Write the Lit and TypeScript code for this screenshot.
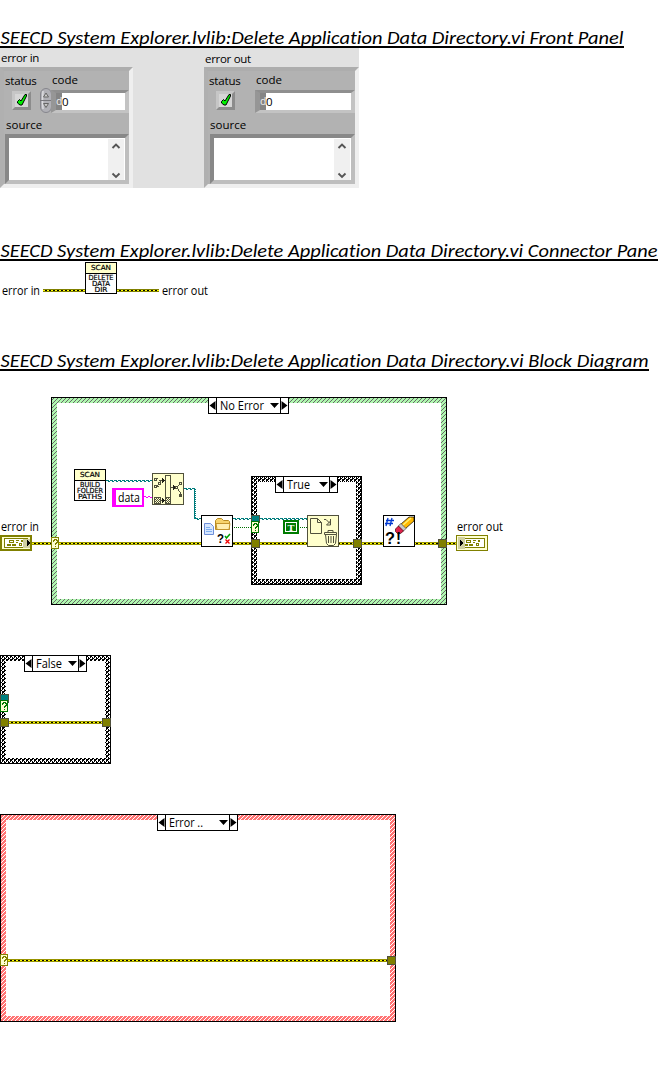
import { LitElement, html, svg, css } from "lit";
import { customElement, property } from "lit/decorators.js";

const label = (x: number, y: number, width: number, text: string, cls = "label") =>
  svg`<text class=${cls} x=${x} y=${y} textLength=${width} lengthAdjust="spacingAndGlyphs">${text}</text>`;

const errorWire = (x1: number, x2: number, y: number, edge = "#989400") => svg`
  <path d="M${x1} ${y + 0.5}H${x2}" stroke=${edge} stroke-width="3"/>
  <path d="M${x1} ${y + 0.5}H${x2}" stroke="#000"/>
  <path d="M${x1} ${y + 0.5}H${x2}" stroke="#ffff00" stroke-dasharray="2 2"/>`;

const tealWire = (x1: number, x2: number, y: number) => svg`
  <path d="M${x1} ${y + 0.5}H${x2}" stroke="#007c7c" stroke-dasharray="3 1"/>
  <path d="M${x1} ${y + 1.5}H${x2}" stroke="#007c7c" stroke-dasharray="2 2" stroke-dashoffset="-2"/>`;

const frame = (x: number, y: number, w: number, h: number, fill: string) => svg`
  <rect x=${x} y=${y} width=${w} height=${h} fill="#000"/>
  <rect x=${x + 1} y=${y + 1} width=${w - 2} height=${h - 2} fill=${`url(#${fill})`}/>
  <rect x=${x + 6} y=${y + 6} width=${w - 12} height=${h - 12} fill="#fff"/>`;

const selector = (x: number, y: number, w: number, text: string, tw: number) => svg`
  <rect x=${x + 0.5} y=${y + 0.5} width=${w - 1} height="16" fill="#fff" stroke="#000"/>
  <path d="M${x + 8.5} ${y}v17M${x + w - 8.5} ${y}v17" stroke="#000"/>
  <path d="M${x + 7.5} ${y + 4}v9l-6-4.500zM${x + w - 7.5} ${y + 4}v9l6-4.500zM${x + w - 19} ${y + 6}h9l-4.500 5z" fill="#000"/>
  ${label(x + 12, y + 13, tw, text)}`;

const tunnel = (x: number, y: number, color: string, w = 8, h = 8) =>
  svg`<rect x=${x + 0.5} y=${y + 0.5} width=${w} height=${h} fill=${color} stroke="#50503c"/>`;

const question = (x: number, y: number, color: string) => svg`
  <rect x=${x + 0.5} y=${y + 0.5} width="7" height="11" fill="#ffffd0" stroke=${color}/>
  <path d="M${x + 2} ${y + 4.5}v-1h1v-1h2v1h1v2h-1v1h-1v1.500M${x + 4} ${y + 8.5}v1.200" fill="none" stroke=${color}/>`;

const viIcon = (x: number, y: number, lines: [string, number][]) => svg`
  <rect x=${x + 0.5} y=${y + 0.5} width="31" height="31" fill="#fff" stroke="#000"/>
  <rect x=${x + 1} y=${y + 1} width="30" height="10" fill="#ffffcc"/>
  <path d="M${x} ${y + 11.5}h32" stroke="#000"/>
  ${label(x + 6, y + 8, 20, "SCAN", "pixel")}
  ${lines.map(([t, w], i) => label(x + 16 - w / 2, y + 18 + i * 6, w, t, "pixel"))}`;

const clusterGlyph = (x: number, y: number) => svg`
  <rect x=${x + 0.5} y=${y + 0.5} width="23" height="9" fill="#fff" stroke="#808000"/>
  <g fill="#808000">
    <rect x=${x + 5} y=${y + 2} width="5" height="3"/><rect x=${x + 3} y=${y + 6} width="4" height="2"/>
    <rect x=${x + 8} y=${y + 6} width="4" height="2"/><rect x=${x + 12} y=${y + 2} width="3" height="1"/>
    <rect x=${x + 12} y=${y + 4} width="2" height="1"/><rect x=${x + 17} y=${y + 2} width="2" height="2"/>
  </g>
  <rect x=${x + 6} y=${y + 3} width="3" height="1" fill="#fff"/>
  <rect x=${x + 15.500} y=${y + 5.500} width="2" height="2" fill="none" stroke="#808000"/>`;

const defs = svg`<defs>
  <pattern id="green" width="4" height="4" patternUnits="userSpaceOnUse">
    <rect width="4" height="4" fill="#b0f8b0"/>
    <path d="M3 0h1v1h-1zM2 1h1v1h-1zM1 2h1v1h-1zM0 3h1v1h-1z" fill="#686868"/>
  </pattern>
  <pattern id="red" width="4" height="4" patternUnits="userSpaceOnUse">
    <rect width="4" height="4" fill="#ff7474"/>
    <path d="M3 0h1v1h-1zM2 1h1v1h-1zM1 2h1v1h-1zM0 3h1v1h-1z" fill="#fff"/>
  </pattern>
  <pattern id="dark" width="4" height="4" patternUnits="userSpaceOnUse">
    <rect width="4" height="4" fill="#000"/>
    <path d="M0 0h2v1h-2zM3 1h1v1h-1zM2 2h2v1h-2zM1 3h1v1h-1zM1 1h1v1h-1z" fill="#fff"/>
  </pattern>
  <pattern id="check" width="2" height="2" patternUnits="userSpaceOnUse">
    <path d="M0 0h1v1h-1zM1 1h1v1h-1z" fill="#50503c"/>
  </pattern>
</defs>`;

const drawingText = css`
  svg { display: block; }
  text { fill: #000; white-space: pre; }
  .label { font: 12px "Open Sans", "Noto Sans", sans-serif; }
  .pixel { font: 7px "DejaVu Sans", sans-serif; stroke: #000; stroke-width: 0.2px; }
  .crisp { shape-rendering: crispEdges; }
`;

@customElement("section-title")
class SectionTitle extends LitElement {
  @property() text = "";
  @property({ type: Number }) width = 600;
  static styles = [drawingText, css`
    :host { display: block; height: 24px; overflow: hidden; }
    h2 { margin: 0; font: inherit; }
    .heading { font: italic 17.800px Carlito, Lato, sans-serif; font-variant-ligatures: none; }
  `];
  render() {
    return html`<h2><svg width="658" height="24">
      ${label(0.5, 20, this.width - 1, this.text, "heading")}
      <rect y="22" width=${this.width} height="2" fill="#000"/>
    </svg></h2>`;
  }
}

@customElement("error-cluster")
class ErrorCluster extends LitElement {
  @property() name = "";
  @property({ type: Boolean }) control = false;
  static styles = css`
    :host { display: block; font: 11.500px/16px "Open Sans", "Noto Sans", sans-serif; color: #000; }
    .name { height: 19px; padding: 2px 0 0 1px; box-sizing: border-box; letter-spacing: -0.3px; }
    .indicator.name { padding-top: 3px; }
    .box { box-sizing: border-box; width: 155px; height: 121px; background: #b2b2b2; padding: 0 0 0 1px;
      border: 4px solid; border-color: #adadad #efefef #efefef #b0b0b0; }
    .box.control { width: 133px; }
    .labels { display: flex; height: 19px; letter-spacing: -0.15px; }
    .status { width: 47px; padding-top: 2px; }
    .code { padding-top: 1px; letter-spacing: 0; }
    .values { display: flex; height: 23px; margin-left: 7px; }
    .led { box-sizing: border-box; width: 19px; height: 19px; margin: 1px 0 0; background: #d6d6d6;
      border: 3px solid; border-color: #c6c6c6 #8c8c8c #8c8c8c #c6c6c6; }
    .led svg { display: block; margin: -1px 0 0 1px; }
    .spin { width: 12px; margin: -2px -1px 0 9px; }
    .gap { width: 20px; }
    .field { box-sizing: border-box; display: flex; flex: 1; height: 23px; border: 4px solid;
      border-color: #8f8f8f #c3c3c3 #c3c3c3 #969696; border-width: 3px 4px 3px 5px; line-height: 17px; }
    .radix { width: 6px; background: #858585; color: #eee; text-align: center; font-size: 10.500px; }
    .digits { flex: 1; background: #fff; }
    .source { padding-left: 1px; height: 22px; padding-top: 4px; box-sizing: border-box; line-height: 15px; }
    .memo { box-sizing: border-box; height: 50px; width: 145px; margin-left: 1px; background: #fff; margin-top: -1px;
      border: 4px solid; border-color: #888 #bebebe #bebebe #888; display: flex; justify-content: flex-end; }
    .control .memo { width: 124px; margin-left: 0; }
    .scroll { width: 16px; margin: 1px 1px 0 0; background: #f0f0f0; }
    .scroll svg { display: block; }
  `;
  render() {
    const kind = this.control ? "control" : "indicator";
    return html`
      <div class="name ${kind}">${this.name}</div>
      <div class="box ${kind}">
        <div class="labels"><span class="status">status</span><span class="code">code</span></div>
        <div class="values">
          <div class="led"><svg width="12" height="14" viewBox="0 0 12 14">
            <path d="M1.500 8.500l2-2 1.500 1.500 4-6.500h1.500v1.500l-4.500 9h-2l-2.500-2z" fill="#00f000" stroke="#000"/>
          </svg></div>
          ${this.control
            ? html`<svg class="spin" width="12" height="25" viewBox="0 0 12 25">
                <rect x=".5" y=".5" width="11" height="24" rx="5.500" fill="#b0b0b6" stroke="#85858c"/>
                <path d="M3 3q-1 9 0 18" fill="none" stroke="#dcdce0" stroke-width="1.500"/>
                <path d="M0 12.500h12" stroke="#77777c"/>
                <path d="M3.500 9h5l-2.500-4zM3.500 15.500h5l-2.500 4z" fill="#ccc" stroke="#666"/>
              </svg>`
            : html`<span class="gap"></span>`}
          <div class="field"><span class="radix">d</span><span class="digits">0</span></div>
        </div>
        <div class="source">source</div>
        <div class="memo"><div class="scroll"><svg width="16" height="41" viewBox="0 0 16 41">
          <path d="M4.500 9l3.500-3.500 3.500 3.500M4.500 34.500l3.500 3.500 3.500-3.500" fill="none" stroke="#555" stroke-width="1.900"/>
        </svg></div></div>
      </div>`;
  }
}

@customElement("connector-pane")
class ConnectorPane extends LitElement {
  static styles = [drawingText, css`:host { display: block; }`];
  render() {
    return html`<svg width="658" height="40" viewBox="0 261 658 40">
      <g class="crisp" fill="none">
        ${errorWire(43, 85, 290, "#808000")}${errorWire(117, 159, 290, "#808000")}
        ${viIcon(85, 262, [["DELETE", 25], ["DATA", 18], ["DIR", 13]])}
      </g>
      ${label(2, 295, 38, "error in")}${label(162, 295, 46, "error out")}
    </svg>`;
  }
}

@customElement("block-diagram")
class BlockDiagram extends LitElement {
  static styles = [drawingText, css`
    :host { display: block; }
    .bold { font: bold 17px "Liberation Sans", sans-serif; }
    .mark { font: bold 13px "Liberation Sans", sans-serif; }
    .tee { font: bold 9px "Liberation Serif", serif; fill: #fff; }
    .data { font: 13px "Open Sans", sans-serif; }
  `];

  pathIcon() {
    return svg`
      <rect x="152.500" y="473.500" width="31" height="31" fill="#ffffcc" stroke="#50503c"/>
      <path d="M155 480.500l3-2M158 484l3-3M156 485l3 2M159 480.500h5M171 487.500h6M177 487l4-4M178 490l3 3M157 500.500h8" stroke="#50503c" fill="none"/>
      <path d="M162 478v5l3-2.500zM173 485v5l3-2.500zM162 498v5l3-2.500z" fill="#202018"/>
      <g fill="#ffffcc" stroke="#50503c">
        <rect x="154.500" y="478.500" width="2" height="2"/><rect x="158.500" y="482.500" width="2" height="2"/>
        <rect x="154.500" y="485.500" width="2" height="2"/><rect x="165.500" y="475.500" width="5" height="22"/>
        <rect x="175.500" y="486.500" width="2" height="2"/><rect x="179.500" y="482.500" width="2" height="2"/>
        <rect x="179.500" y="494.500" width="2" height="2" fill="#50503c"/>
        <rect x="154.500" y="497.500" width="6" height="6"/><rect x="165.500" y="497.500" width="5" height="6"/>
      </g>
      <path d="M178 489.500l3 4" stroke="#50503c"/>
      <rect x="155" y="498" width="6" height="6" fill="url(#check)"/>
      <rect x="166" y="498" width="5" height="6" fill="url(#check)"/>`;
  }

  fileIcon() {
    return svg`
      <rect class="crisp" x="201.500" y="515.500" width="31" height="31" fill="#fff" stroke="#000"/>
      <path d="M204.500 523.500h6l3 3v8h-9z" fill="#d6e6ff" stroke="#6f8fd8"/>
      <path d="M206 527.500h4M206 529.500h6M206 531.500h6" stroke="#7fb0f0"/>
      <path d="M215.500 529.500v-9l2-2h4l2 2h5l1 1v8z" fill="#f7d36c" stroke="#b88a20"/>
      <path d="M217 529.500l-1-6h14l-1 6z" fill="#ffeeb0" stroke="#c4942c"/>
      ${label(217, 543, 7, "?", "mark")}
      <path d="M225 536l1.500 2 3.500-4" fill="none" stroke="#00a000" stroke-width="1.500"/>
      <path d="M225.500 539.500l4 4m0-4l-4 4" stroke="#f00000" stroke-width="1.300"/>`;
  }

  deleteIcon() {
    return svg`
      <rect x="307.500" y="515.500" width="31" height="31" fill="#ffffcc" stroke="#50503c"/>
      <g fill="none" stroke="#50503c">
        <path d="M310.500 518.500h7l4 4v11h-11zM317.500 518.500v4h4"/>
        <path d="M324 519.500h2l4 4M330.500 519v6h-4l4-4"/>
        <path d="M324.500 534.500v-2h12v2zM328 532.500v-2h5v2M325.500 534.500l1 9 2 2h5l2-2 1-9M328.500 536v7M331 536v7M333.500 536v7"/>
      </g>`;
  }

  clearIcon() {
    return svg`
      <rect class="crisp" x="383.500" y="515.500" width="31" height="31" fill="#fff" stroke="#000"/>
      <path d="M388 518l-2 8M392 518l-2 8M386 520.500h8M385 523.500h8" stroke="#0038d0" stroke-width="1.300"/>
      <path d="M401 524l8-7h5v4l-9 8z" fill="#ffb800" stroke="#000" stroke-width=".7"/>
      <path d="M403 525l8-7" stroke="#fff070" stroke-width="1.500"/>
      <path d="M398 526l3-2.500 5 5-3 3z" fill="#c8c8c8" stroke="#555" stroke-width=".7"/>
      <path d="M395.500 529l3-3 5 5-3 2.500h-3l-2-2z" fill="#e0204c" stroke="#400" stroke-width=".7"/>
      ${label(385, 544, 10, "?", "bold")}
      ${label(396, 544, 5, "!", "bold")}`;
  }

  render() {
    return html`<svg width="658" height="662" viewBox="0 390 658 662">
      ${defs}
      <g class="crisp" fill="none">
        ${frame(51, 397, 396, 208, "green")}
        ${errorWire(32, 51, 543)}${errorWire(59, 251, 543)}
        ${tealWire(106, 152, 480)}${tealWire(184, 196, 488)}
        <path d="M194.500 489v30" stroke="#007c7c"/><path d="M195.500 489v30" stroke="#007c7c" stroke-dasharray="1 1"/>
        ${tealWire(195, 201, 518)}${tealWire(233, 251, 518)}
        <path d="M144 496.500h8" stroke="#f0f" stroke-dasharray="2 2"/>
        <path d="M146 497.500h6" stroke="#f0f" stroke-dasharray="2 2"/>
        <path d="M234 527.500h17" stroke="#007000" stroke-dasharray="1 1"/>
        ${frame(251, 476, 111, 109, "dark")}
        ${tealWire(260, 307, 518)}
        <path d="M300 527.500h7" stroke="#007000" stroke-dasharray="1 1"/>
        ${errorWire(260, 353, 543)}${errorWire(362, 438, 543)}${errorWire(447, 456, 543)}
        ${question(51, 537, "#808000")}
        ${tunnel(251, 515, "#008080", 8, 7)}${question(251, 521, "#007800")}
        ${tunnel(251, 539, "#808000")}${tunnel(353, 539, "#808000")}${tunnel(438, 539, "#808000")}
        ${viIcon(74, 469, [["BUILD", 20], ["FOLDER", 26], ["PATHS", 24]])}
        <rect x="112" y="488" width="32" height="19" fill="#f0f"/><rect x="116" y="490" width="26" height="15" fill="#fff"/>
        <rect x="283" y="520" width="16" height="14" fill="#007c00"/>
        <rect x="285.500" y="522.500" width="11" height="9" stroke="#fff"/>
        <rect x="1" y="536" width="30" height="14" fill="#ffffd0" stroke="#808000" stroke-width="2"/>
        ${clusterGlyph(4, 538)}
        <rect x="23" y="539" width="7" height="9" fill="#d0d0a0"/><path d="M27 540v6l4-3z" fill="#000"/>
        <rect x="456.500" y="535.500" width="31" height="15" fill="#ffffd0" stroke="#808000"/>
        ${clusterGlyph(461, 538)}
        <rect x="458" y="537" width="7" height="12" fill="#d0d0a0"/><path d="M460 540v6l4-3z" fill="#000"/>
        ${this.pathIcon()}
      </g>
      ${selector(208, 397, 81, "No Error", 44)}
      ${selector(275, 476, 63, "True", 23)}
      ${label(118, 502, 22, "data", "data")}
      ${label(287.500, 530.500, 7, "T", "tee")}
      ${this.fileIcon()}${this.deleteIcon()}${this.clearIcon()}
      ${label(1, 531, 38, "error in")}${label(457, 531, 46, "error out")}

      <g class="crisp" fill="none">
        ${frame(0, 655, 111, 109, "dark")}
        ${errorWire(9, 102, 722)}
        ${tunnel(0, 694, "#008080", 8, 8)}${question(0, 700, "#007800")}
        ${tunnel(0, 718, "#808000")}${tunnel(102, 718, "#808000")}
      </g>
      ${selector(24, 655, 63, "False", 26)}

      <g class="crisp" fill="none">
        ${frame(0, 814, 396, 208, "red")}
        ${errorWire(8, 387, 960)}
        ${question(0, 954, "#808000")}${tunnel(387, 956, "#808000")}
      </g>
      ${selector(157, 814, 81, "Error ..", 34)}
    </svg>`;
  }
}

@customElement("app-root")
class AppRoot extends LitElement {
  static styles = css`
    :host { display: block; box-sizing: border-box; height: 1072px; padding-top: 24px; background: #fff; overflow: hidden; }
    .panel { display: flex; gap: 71px; width: 359px; height: 140px; background: #e1e1e1; margin-bottom: 49px; }
    .connector { display: block; margin-bottom: 46px; }
    .diagram { display: block; margin-top: 19px; }
  `;
  render() {
    const vi = "SEECD System Explorer.lvlib:Delete Application Data Directory.vi";
    return html`
      <section-title text="${vi} Front Panel" width="624"></section-title>
      <div class="panel">
        <error-cluster name="error in" control></error-cluster>
        <error-cluster name="error out"></error-cluster>
      </div>
      <section-title text="${vi} Connector Pane" width="658"></section-title>
      <connector-pane class="connector"></connector-pane>
      <section-title text="${vi} Block Diagram" width="649"></section-title>
      <block-diagram class="diagram"></block-diagram>`;
  }
}
